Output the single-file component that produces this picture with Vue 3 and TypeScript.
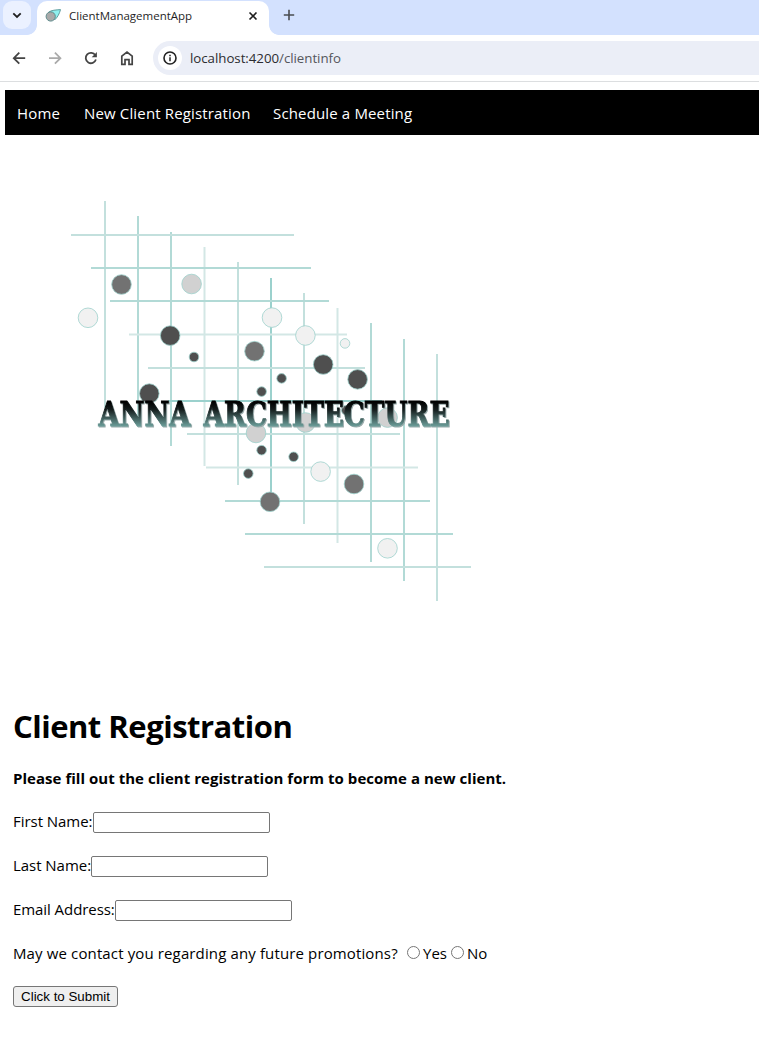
<script setup lang="ts">
type Line = [number, number, number, string]
type Dot = [number, number, number, string]

const pale = '#d3e7e5'
const light = '#c3e0dd'
const mid = '#b2dad6'
const strong = '#9bd1cd'

// [x, top, bottom, colour]
const verticals: Line[] = [
  [105, 201, 408, light],
  [138, 216, 427, mid],
  [171, 232, 446, mid],
  [204.5, 247, 466, pale],
  [238, 262, 485, light],
  [271, 278, 504, strong],
  [304, 293, 524, light],
  [337.5, 308, 543, pale],
  [371, 323, 562, mid],
  [404, 339, 581, mid],
  [437, 354, 601, light],
]

// [y, left, right, colour]
const horizontals: Line[] = [
  [235, 71, 294, light],
  [268, 91, 311, mid],
  [301, 110, 329, mid],
  [334.5, 129, 347, pale],
  [368, 148, 365, light],
  [401, 168, 382, strong],
  [434, 187, 400, light],
  [467.5, 206, 418, pale],
  [501, 225, 430, mid],
  [534, 245, 453, mid],
  [567, 264, 471, light],
]

// [cx, cy, r, colour]
const dots: Dot[] = [
  [121.5, 284.5, 9.8, '#727272'],
  [191.6, 284, 9.8, '#d1d1d1'],
  [88, 317.8, 9.8, '#f1f1f1'],
  [170.2, 335.6, 9.8, '#4f4f4f'],
  [194, 357, 4.8, '#4f4f4f'],
  [254.5, 351.2, 9.8, '#727272'],
  [149.3, 393.6, 9.8, '#4f4f4f'],
  [261.6, 391.6, 4.8, '#4f4f4f'],
  [272, 317.6, 9.8, '#f1f1f1'],
  [305.4, 335.5, 9.8, '#f1f1f1'],
  [345, 343.4, 4.8, '#f1f1f1'],
  [281.6, 378.4, 4.8, '#4f4f4f'],
  [323.2, 364.5, 9.8, '#4f4f4f'],
  [357.6, 379.4, 9.8, '#4f4f4f'],
  [256, 433, 9.8, '#d1d1d1'],
  [261.6, 450.2, 4.8, '#4f4f4f'],
  [248.3, 473.6, 4.8, '#4f4f4f'],
  [270, 501.8, 9.8, '#727272'],
  [293.6, 456.8, 4.8, '#4f4f4f'],
  [320.6, 471.6, 9.8, '#f1f1f1'],
  [354, 484, 9.8, '#727272'],
  [305.5, 422.5, 9.8, '#d1d1d1'],
  [346.3, 410.3, 4.8, '#4f4f4f'],
  [387.6, 417.6, 9.8, '#d1d1d1'],
  [387.5, 548.3, 9.8, '#f1f1f1'],
]
</script>

<template>
  <div class="window">
    <div class="tabstrip">
      <div class="tab-search">
        <svg width="28" height="28" viewBox="0 0 28 28"><path d="M10.3 12.3 14 15.9 17.7 12.3" fill="none" stroke="#1f1f1f" stroke-width="1.8" /></svg>
      </div>
      <div class="tab">
        <svg class="favicon" width="17" height="16" viewBox="0 0 17 16">
          <path d="M3.6 4.2C6.5 2 11 2 15.5 1.6 14.5 5.5 12.5 9.5 9.5 12Z" fill="#8ff0ee" stroke="#5f9c9d" />
          <circle cx="5.7" cy="8.5" r="4.6" fill="#a9a9a9" stroke="#5f8c8d" />
        </svg>
        <span class="tab-title">ClientManagementApp</span>
        <svg class="close" width="10" height="10" viewBox="0 0 10 10"><path d="M1.5 1.5 8.5 8.5M8.5 1.5 1.5 8.5" stroke="#1f1f1f" stroke-width="1.6" /></svg>
      </div>
      <svg class="plus" width="12" height="12" viewBox="0 0 12 12"><path d="M6 .8V11.2M.8 6H11.2" stroke="#4a4c50" stroke-width="1.6" /></svg>
    </div>

    <div class="toolbar">
      <svg class="icons" width="153" height="46" viewBox="0 35 153 46" fill="none" stroke-width="1.8">
        <path d="M25.2 58.2H14M19.3 52.7 13.8 58.2 19.3 63.7" stroke="#444" />
        <path d="M49 58.2H60.2M54.9 52.7 60.4 58.2 54.9 63.7" stroke="#aaa" />
        <path d="M95.3 55.2A5.2 5.2 0 1 0 95.9 59.6" stroke="#444" />
        <path d="M96.9 52V57.2H91.7Z" fill="#444" />
        <path d="M121.8 64.3V56.2L127 52.1 132.2 56.2V64.3H129V59.6H125V64.3Z" stroke="#444" stroke-width="1.7" />
      </svg>
      <div class="address">
        <span class="info">
          <svg width="14" height="14" viewBox="0 0 14 14"><circle cx="7" cy="7" r="6" fill="none" stroke="#222" stroke-width="1.6" /><path d="M7 6.2V10.2M7 3.7V5.2" stroke="#222" stroke-width="1.5" /></svg>
        </span>
        <span class="url">localhost:4200<span class="path">/clientinfo</span></span>
      </div>
    </div>

    <nav>
      <a class="n1">Home</a>
      <a class="n2">New Client Registration</a>
      <a class="n3">Schedule a Meeting</a>
    </nav>

    <svg class="art" width="759" height="555" viewBox="0 135 759 555">
      <defs>
        <linearGradient id="ink" gradientUnits="userSpaceOnUse" x1="0" y1="402" x2="0" y2="427">
          <stop offset="0" stop-color="#000" />
          <stop offset="0.3" stop-color="#141c1c" />
          <stop offset="1" stop-color="#6fa39f" />
        </linearGradient>
      </defs>
      <line v-for="v in verticals" :key="'v' + v[0]" :x1="v[0]" :x2="v[0]" :y1="v[1]" :y2="v[2]" :stroke="v[3]" stroke-width="2" />
      <line v-for="h in horizontals" :key="'h' + h[0]" :y1="h[0]" :y2="h[0]" :x1="h[1]" :x2="h[2]" :stroke="h[3]" stroke-width="2" />
      <circle v-for="(d, i) in dots" :key="i" :cx="d[0]" :cy="d[1]" :r="d[2]" :fill="d[3]" stroke="#9dd0cb" stroke-width="0.8" />
      <g class="brand">
        <text x="98.5" y="426" textLength="92" lengthAdjust="spacingAndGlyphs">ANNA</text>
        <text x="203.5" y="426" textLength="246" lengthAdjust="spacingAndGlyphs">ARCHITECTURE</text>
      </g>
    </svg>

    <main>
      <h1>Client Registration</h1>
      <p class="intro">Please fill out the client registration form to become a new client.</p>
      <div class="field"><label class="first" for="first">First Name:</label><input id="first" type="text" /></div>
      <div class="field"><label class="last" for="last">Last Name:</label><input id="last" type="text" /></div>
      <div class="field"><label class="email" for="email">Email Address:</label><input id="email" type="text" /></div>
      <div class="field">
        <span class="question">May we contact you regarding any future promotions?</span>
        <input id="yes" type="radio" name="promo" /><label class="yes" for="yes">Yes</label>
        <input id="no" type="radio" name="promo" /><label class="no" for="no">No</label>
      </div>
      <button type="button">Click to Submit</button>
    </main>
  </div>
</template>

<style>
body { margin: 0; background: #fff; overflow: hidden; }
</style>

<style scoped>
.window { width: 759px; height: 1047px; overflow: hidden; background: #fff; color: #000; font-family: "Open Sans", "Noto Sans", sans-serif; font-size: 15px; white-space: nowrap; }
svg { display: block; flex: none; }
.tabstrip { display: flex; height: 35px; background: #d3e1fe; }
.tab-search { width: 28px; height: 28px; margin: 1px 6px 0 3px; border-radius: 9px; background: #ebf1ff; }
.tab { position: relative; display: flex; align-items: center; box-sizing: border-box; width: 232px; height: 34px; margin-top: 1px; padding: 0 0 5px 8px; border-radius: 10px 10px 0 0; background: #fff; }
.tab::before, .tab::after { content: ""; position: absolute; bottom: 0; width: 10px; height: 10px; }
.tab::before { left: -10px; background: radial-gradient(circle at 0 0, transparent 9.5px, #fff 10.2px); }
.tab::after { right: -10px; background: radial-gradient(circle at 100% 0, transparent 9.5px, #fff 10.2px); }
.tab-title { width: 123px; margin-left: 7px; font-size: 11.5px; color: #1f1f1f; }
.close { margin-left: 56px; }
.plus { margin: 9px 0 0 14px; }
.toolbar { display: flex; align-items: center; height: 46px; border-bottom: 1px solid #dcdee0; }
.address { display: flex; align-items: center; flex: 1; height: 34px; padding-left: 5px; border-radius: 17px 0 0 17px; background: #ebeef7; }
.info { display: grid; place-items: center; width: 24px; height: 24px; border-radius: 50%; background: #fff; }
.url { margin-left: 8px; font-size: 13.3px; letter-spacing: -0.04px; color: #2b2c30; }
.path { color: #55575c; }
nav { display: flex; align-items: center; height: 45px; margin: 8px 0 0 5px; padding-left: 12px; background: #000; color: #fff; letter-spacing: 0.15px; }
.n1 { width: 67px; }
.n2 { width: 189px; }
.brand { font-family: "DejaVu Serif", serif; font-weight: bold; font-size: 33px; fill: url(#ink); stroke: url(#ink); stroke-width: 1px; filter: drop-shadow(1px 1px 0.5px #9aa); }
main { padding-left: 13px; }
h1 { height: 44px; margin: 14px 0 0; font-size: 31px; line-height: 44px; font-weight: 700; letter-spacing: -0.5px; }
.intro { height: 22px; margin: 19px 0 0; line-height: 22px; font-weight: 700; letter-spacing: 0.035px; }
.field { display: flex; align-items: center; height: 22px; margin-top: 22px; }
.field label, .question { position: relative; top: -1px; }
.intro + .field { margin-top: 22px; }
.first { width: 80px; letter-spacing: -0.04px; }
.last { width: 78px; letter-spacing: -0.04px; }
.email { width: 102px; letter-spacing: -0.07px; }
.question { width: 391px; letter-spacing: 0.13px; }
input { flex: none; margin: 0; }
input[type="text"] { box-sizing: border-box; width: 177px; height: 21px; border: 1px solid #767676; border-radius: 2px; background: #fff; }
input[type="radio"] { width: 13px; height: 13px; margin: -3px 3px 0; }
.yes { width: 25px; }
button { display: block; box-sizing: border-box; width: 105px; height: 21px; margin-top: 21px; padding: 0; border: 1px solid #767676; border-radius: 3px; background: #efefef; color: #000; font: 13.33px "Liberation Sans", Arial, sans-serif; }
</style>
